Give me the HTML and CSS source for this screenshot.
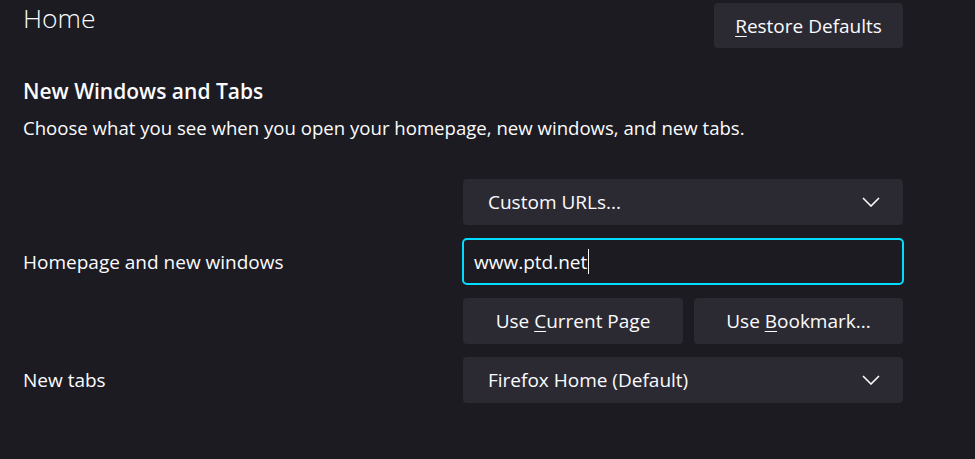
FILE: index.html
```html
<!DOCTYPE html>
<html>
<head>
<meta charset="utf-8">
<link rel="stylesheet" href="styles.css">
</head>
<body>
<div class="page">
  <div class="header">
    <h1 class="title">Home</h1>
    <button class="btn restore"><u>R</u>estore Defaults</button>
  </div>
  <h2 class="section">New Windows and Tabs</h2>
  <p class="desc">Choose what you see when you open your homepage, new windows, and new tabs.</p>
  <div class="grid">
    <div></div>
    <div class="select"><span>Custom URLs...</span><svg class="chev" width="18" height="10" viewBox="0 0 18 10"><path d="M1 1 L9 9 L17 1" fill="none" stroke="#fbfbfe" stroke-width="1.6"/></svg></div>
    <div class="label">Homepage and new windows</div>
    <div class="input"><span>www.ptd.net</span><span class="caret"></span></div>
    <div></div>
    <div class="btnrow">
      <button class="btn wide">Use <u>C</u>urrent Page</button>
      <button class="btn">Use <u>B</u>ookmark...</button>
    </div>
    <div class="label">New tabs</div>
    <div class="select"><span>Firefox Home (Default)</span><svg class="chev" width="18" height="10" viewBox="0 0 18 10"><path d="M1 1 L9 9 L17 1" fill="none" stroke="#fbfbfe" stroke-width="1.6"/></svg></div>
  </div>
</div>
</body>
</html>
```
FILE: styles.css
```css
html, body {
  margin: 0;
  background: #1c1b22;
  color: #fbfbfe;
  font-family: "Open Sans", "Noto Sans", sans-serif;
}
.page {
  width: 880px;
  padding-left: 23px;
}
.header {
  display: flex;
  justify-content: space-between;
  align-items: flex-start;
  padding-top: 3px;
}
.title {
  margin: 0;
  padding-top: 1px;
  font-weight: 300;
  font-size: 26.5px;
  line-height: 28px;
}
.btn {
  background: #2b2a33;
  color: #fbfbfe;
  border: none;
  border-radius: 4px;
  font-family: inherit;
  font-size: 19px;
  height: 46px;
  padding: 0 16px;
}
.btn u { text-decoration-thickness: 1px; text-underline-offset: 3px; }
.restore { width: 189px; height: 45px; }
.section {
  margin: 30px 0 0;
  font-size: 21px;
  font-weight: 600;
  line-height: 26px;
}
.desc {
  margin: 12px 0 0;
  font-size: 18.6px;
  line-height: 24px;
}
.grid {
  margin-top: 39px;
  display: grid;
  grid-template-columns: 440px 440px;
  row-gap: 13px;
  align-items: center;
}
.label {
  font-size: 19px;
}
.select {
  height: 46px;
  background: #2b2a33;
  border-radius: 4px;
  display: flex;
  align-items: center;
  justify-content: space-between;
  padding: 0 23px 0 25px;
  font-size: 19px;
  box-sizing: border-box;
}
.chev { display: block; }
.input {
  height: 47px;
  margin-left: -1px;
  margin-right: -1px;
  border: 2px solid #00ddff;
  border-radius: 5px;
  box-sizing: border-box;
  background: #1c1b22;
  display: flex;
  align-items: center;
  padding-left: 10px;
  font-size: 19px;
}
.caret {
  width: 1px;
  height: 25px;
  background: #fbfbfe;
  margin-left: 1px;
}
.btnrow {
  display: flex;
  gap: 11px;
}
.btnrow .btn { flex: 1; }
.btnrow .wide { flex: 0 0 220px; }
```
